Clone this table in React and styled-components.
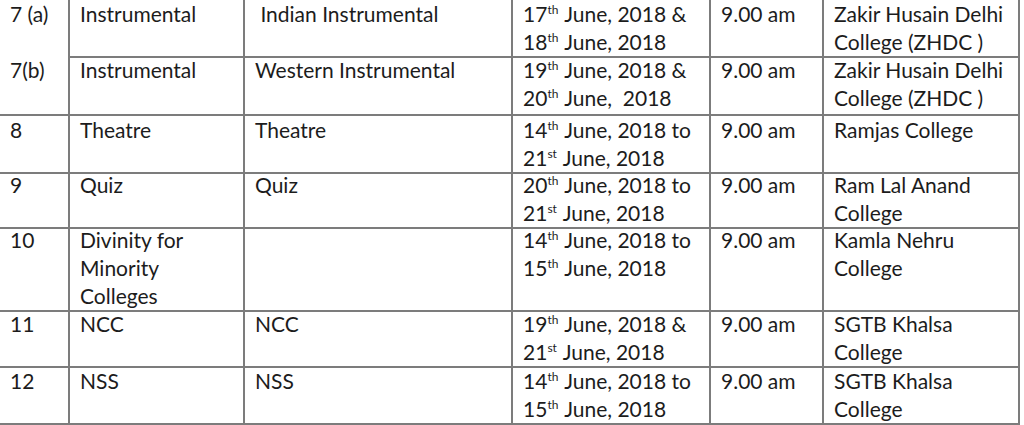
import React from "react";
import styled, { createGlobalStyle } from "styled-components";

const Global = createGlobalStyle`
  html, body { margin: 0; padding: 0; background: #ffffff; }
  body { overflow: hidden; width: 1024px; height: 425px; }
`;

const LINE = "2px solid #7c7c7c";
const COLS = "70px 175px 268px 198px 113px 196px";

const Table = styled.div`
  display: flex;
  flex-direction: column;
  width: 1020px;
  font-family: Lato, "Open Sans", sans-serif;
  font-size: 21px;
  line-height: 28px;
  color: #1c1c1c;
`;

const Row = styled.div`
  display: grid;
  grid-template-columns: ${COLS};
  height: ${(p) => p.$h}px;
`;

const Cell = styled.div`
  box-sizing: border-box;
  padding: 0 6px 0 ${(p) => (p.$col === 0 ? 10 : 10)}px;
  border-bottom: ${(p) => (p.$noBottom ? "none" : LINE)};
  border-right: ${LINE};
  white-space: nowrap;
  overflow: visible;
`;

const Sup = styled.sup`
  font-size: 12px;
  line-height: 0;
  vertical-align: 8px;
  margin-right: 1px;
`;

const d = (n, s) => (
  <>
    {n}
    <Sup>{s}</Sup>
  </>
);

const rows = [
  {
    h: 56,
    noBottomFirst: true,
    c: [
      "7 (a)",
      "Instrumental",
      "\u00a0Indian Instrumental",
      <>
        {d("17", "th")} June, 2018 &amp;
        <br />
        {d("18", "th")} June, 2018
      </>,
      "9.00 am",
      <>
        Zakir Husain Delhi
        <br />
        College (ZHDC )
      </>,
    ],
  },
  {
    h: 60,
    c: [
      "7(b)",
      "Instrumental",
      "Western Instrumental",
      <>
        {d("19", "th")} June, 2018 &amp;
        <br />
        {d("20", "th")} June,{"\u00a0 "}2018
      </>,
      "9.00 am",
      <>
        Zakir Husain Delhi
        <br />
        College (ZHDC )
      </>,
    ],
  },
  {
    h: 55,
    c: [
      "8",
      "Theatre",
      "Theatre",
      <>
        {d("14", "th")} June, 2018 to
        <br />
        {d("21", "st")} June, 2018
      </>,
      "9.00 am",
      "Ramjas College",
    ],
  },
  {
    h: 55,
    c: [
      "9",
      "Quiz",
      "Quiz",
      <>
        {d("20", "th")} June, 2018 to
        <br />
        {d("21", "st")} June, 2018
      </>,
      "9.00 am",
      <>
        Ram Lal Anand
        <br />
        College
      </>,
    ],
  },
  {
    h: 84,
    c: [
      "10",
      <>
        Divinity for
        <br />
        Minority
        <br />
        Colleges
      </>,
      "",
      <>
        {d("14", "th")} June, 2018 to
        <br />
        {d("15", "th")} June, 2018
      </>,
      "9.00 am",
      <>
        Kamla Nehru
        <br />
        College
      </>,
    ],
  },
  {
    h: 57,
    c: [
      "11",
      "NCC",
      "NCC",
      <>
        {d("19", "th")} June, 2018 &amp;
        <br />
        {d("21", "st")} June, 2018
      </>,
      "9.00 am",
      <>
        SGTB Khalsa
        <br />
        College
      </>,
    ],
  },
  {
    h: 56,
    c: [
      "12",
      "NSS",
      "NSS",
      <>
        {d("14", "th")} June, 2018 to
        <br />
        {d("15", "th")} June, 2018
      </>,
      "9.00 am",
      <>
        SGTB Khalsa
        <br />
        College
      </>,
    ],
  },
];

export default function App() {
  return (
    <>
      <Global />
      <Table>
        {rows.map((r, ri) => (
          <Row key={ri} $h={r.h}>
            {r.c.map((content, ci) => (
              <Cell
                key={ci}
                $col={ci}
                $noBottom={r.noBottomFirst && ci === 0}
              >
                {content}
              </Cell>
            ))}
          </Row>
        ))}
      </Table>
    </>
  );
}
